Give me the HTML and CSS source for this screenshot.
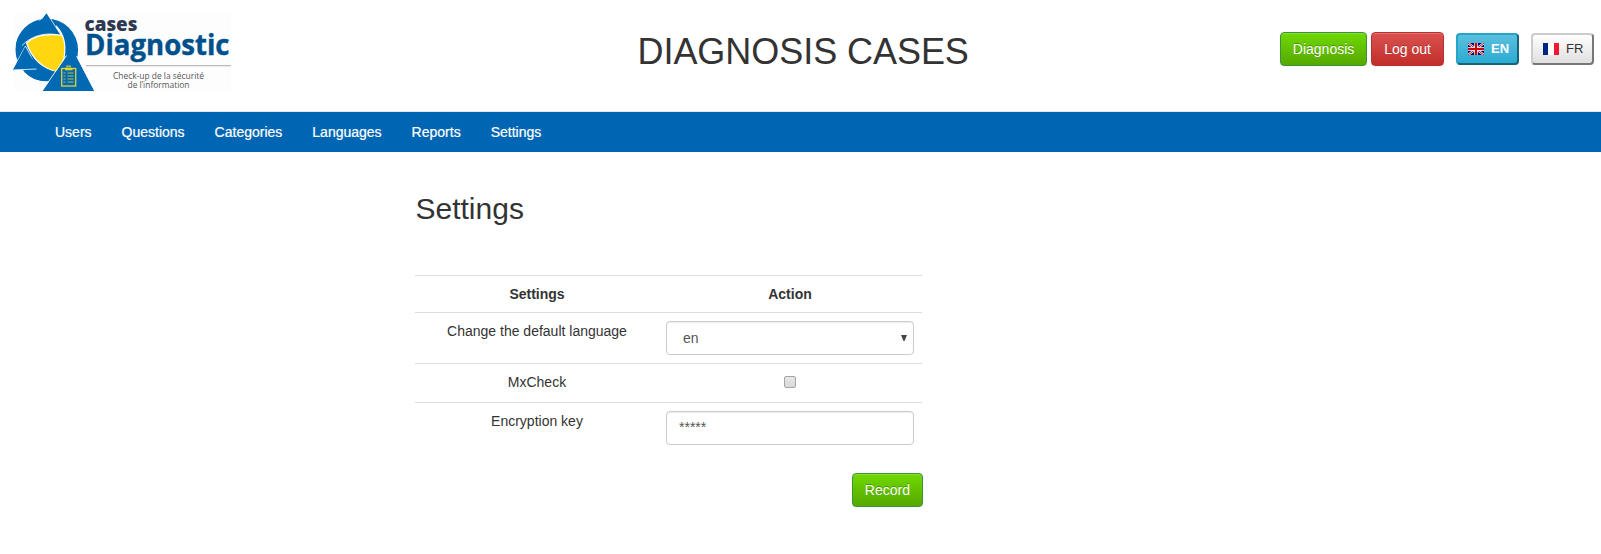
FILE: index.html
```html
<!DOCTYPE html>
<html lang="en">
<head>
<meta charset="utf-8">
<title>Diagnosis Cases</title>
<link rel="stylesheet" href="styles.css">
</head>
<body>
<header class="header">
  <svg class="logo" viewBox="0 0 240 111" role="img" aria-label="Cases Diagnostic">
    <rect x="13" y="13" width="218" height="78" fill="#fdfdfe"/>
    <circle cx="46.800" cy="50" r="31.300" fill="#0069b4"/>
    <path d="M26.500 43C34 35.500 46 33.500 60.500 35L56 26C64 34 66.500 44 64 58C63 64 61 69 58.500 72.500C44 69 32 59 26.500 43Z" fill="#ffd60f" stroke="#fff" stroke-width="1.200"/>
    <path d="M33.500 31L46.500 13L61 35C46 31.500 32 34.500 21.500 46L15.800 46C17 34 25 26 36 21.500L40 23Z" fill="#0069b4"/>
    <path d="M39.500 20.500L46.500 12.500L61 35.300C46 32 32 35 22 45.500" fill="none" stroke="#fff" stroke-width=".8"/>
    <path d="M25.500 46L12.500 70L37.500 69Z" fill="#0069b4" stroke="#fff" stroke-width=".8"/>
    <path d="M25 47L13.500 69.500H24C27 76 34 80 44 81.200L53 76L57 72C43 69.500 30 60 25 47Z" fill="#0069b4"/>
    <path d="M14 70L36.500 69" stroke="#fff" stroke-width=".8"/>
    <path d="M72.500 49L94.300 91H42.500L68 54Z" fill="#0069b4"/>
    <path d="M42 91L66.500 55.500" stroke="#fff" stroke-width=".9"/>
    <path d="M76.500 56L94.800 91" stroke="#fff" stroke-width=".7"/>
    <g fill="none" stroke="#e6d529">
      <rect x="61.700" y="68.500" width="14" height="17.500" stroke-width="1.300"/>
      <path d="M65 69h7.500" stroke-width="2.500"/>
      <path d="M67 67.500v-1.500h3v1.500" stroke-width="1.200"/>
      <path d="M63.500 73h2m-2 3h2m-2 3h2m-2 3h2M67.500 73h6m-6 3h6m-6 3h6m-6 3h6" stroke-width=".8"/>
    </g>
    <text class="logo-cases" x="84.500" y="30.500" textLength="53" lengthAdjust="spacingAndGlyphs">cases</text>
    <text class="logo-name" x="85" y="55" textLength="144.500" lengthAdjust="spacingAndGlyphs">Diagnostic</text>
    <path d="M86 65.700h145" stroke="#aaa" stroke-width="1"/>
    <text class="logo-tag" x="113" y="78.500" textLength="91" lengthAdjust="spacingAndGlyphs">Check-up de la sécurité</text>
    <text class="logo-tag" x="127.500" y="88" textLength="62" lengthAdjust="spacingAndGlyphs">de l’information</text>
  </svg>
  <h1 class="title">DIAGNOSIS CASES</h1>
  <div class="actions">
    <a class="btn btn-success">Diagnosis</a>
    <a class="btn btn-danger">Log out</a>
    <button class="lang lang-active">
      <svg class="flag" viewBox="0 0 16 12"><rect width="16" height="12" fill="#006"/><path d="M0 0L16 12M16 0L0 12" stroke="#fff" stroke-width="2.200"/><path d="M0 0L16 12M16 0L0 12" stroke="#c00" stroke-width="1"/><path d="M8 0V12M0 6H16" stroke="#fff" stroke-width="3.400"/><path d="M8 0V12M0 6H16" stroke="#c00" stroke-width="2"/></svg>
      EN
    </button>
    <button class="lang">
      <svg class="flag" viewBox="0 0 16 12" shape-rendering="crispEdges"><rect width="16" height="12" fill="#fff"/><path d="M0 0h5v12H0z" fill="#00267f"/><path d="M11 0h5v12h-5z" fill="#f31830"/></svg>
      FR
    </button>
  </div>
</header>
<nav class="nav">
  <a>Users</a><a>Questions</a><a>Categories</a><a>Languages</a><a>Reports</a><a>Settings</a>
</nav>
<main class="content">
  <h2 class="heading">Settings</h2>
  <table class="table">
    <colgroup><col class="col-name"><col></colgroup>
    <tr><th>Settings</th><th>Action</th></tr>
    <tr><td>Change the default language</td><td><div class="control select"><span>en</span><svg class="arrow" viewBox="0 0 6 6"><path d="M0 0h6L3.500 6h-1z" fill="#444"/></svg></div></td></tr>
    <tr class="check-row"><td>MxCheck</td><td><span class="checkbox"></span></td></tr>
    <tr><td>Encryption key</td><td><div class="control key">*****</div></td></tr>
  </table>
  <div class="footer"><button class="btn btn-success">Record</button></div>
</main>
</body>
</html>
```
FILE: styles.css
```css
* { box-sizing: border-box; }
body {
  margin: 0;
  background: #fff;
  color: #333;
  font: 14px/20px "Liberation Sans", Arial, sans-serif;
}
.header {
  display: grid;
  grid-template-columns: 637.5px 1fr auto;
  height: 112px;
  padding-right: 7px;
  border-bottom: 1px solid #e7e7e7;
}
.logo { width: 240px; height: 111px; }
.logo text { font-family: "Open Sans", sans-serif; }
.logo .logo-cases { font-size: 20px; font-weight: 800; fill: #2e3850; }
.logo .logo-name { font-size: 28px; font-weight: 700; fill: #00508c; stroke: #00508c; stroke-width: .4px; }
.logo .logo-tag { font-size: 8.3px; fill: #555; }
.title {
  margin: 32px 0 0;
  font-size: 36px;
  line-height: 40px;
  font-weight: 500;
  letter-spacing: -.05px;
  white-space: nowrap;
}
.actions {
  display: flex;
  align-items: center;
  height: 34px;
  margin-top: 32px;
}
.btn {
  display: inline-block;
  height: 34px;
  padding: 6px 12px;
  border: 1px solid;
  border-radius: 4px;
  color: #fff;
  font: 14px/20px "Liberation Sans", Arial, sans-serif;
  text-shadow: 0 -1px 0 rgba(0, 0, 0, .25);
  box-shadow: inset 0 1px 0 rgba(255, 255, 255, .2), 0 1px 2px rgba(0, 0, 0, .05);
}
.btn-success { border-color: #3a933a; background: linear-gradient(#70d900, #55a800); }
.btn-danger { margin-left: 4px; border-color: #b8312f; background: linear-gradient(#da524f, #c12e2a); }
.lang {
  display: flex;
  align-items: center;
  gap: 7px;
  width: 63px;
  height: 32px;
  margin: 0 0 0 12px;
  padding: 0 0 0 10px;
  border: 2px solid;
  border-color: #ccc #777 #777 #ccc;
  border-radius: 4px;
  background: linear-gradient(#fff, #dfdfdf);
  color: #333;
  font: 13px/20px "Liberation Sans", Arial, sans-serif;
}
.lang-active {
  border-color: #28a4c9 #18627a #18627a #28a4c9;
  background: linear-gradient(#5bc0de, #2aabd2);
  color: #fff;
  font-weight: 700;
}
.flag { width: 16px; height: 12px; }
.nav {
  display: flex;
  height: 40px;
  padding-left: 40px;
  background: #0066b3;
}
.nav a { padding: 10px 15px; color: #fff; -webkit-text-stroke: .2px #fff; }
.content { width: 508px; margin-left: 415px; }
.heading {
  margin: 40px 0 50px;
  padding-left: .5px;
  font-size: 30px;
  line-height: 33px;
  font-weight: 500;
}
.table {
  width: 507px;
  table-layout: fixed;
  border-collapse: separate;
  border-spacing: 0;
}
.col-name { width: 243px; }
.table th, .table td {
  padding: 8px;
  border-top: 1px solid #ddd;
  text-align: center;
  vertical-align: top;
}
.table tr > :first-child { padding-left: 9px; }
.check-row { height: 39px; }
.control {
  display: flex;
  height: 34px;
  padding: 6px 12px;
  border: 1px solid #ccc;
  border-radius: 4px;
  box-shadow: inset 0 1px 1px rgba(0, 0, 0, .075);
  color: #555;
}
.select { align-items: center; justify-content: space-between; padding: 6px 6px 6px 16px; }
.key { padding-top: 5px; }
.arrow { width: 6px; height: 6px; }
.checkbox {
  display: block;
  width: 12px;
  height: 12px;
  margin: 4px auto 0;
  border: 1px solid #a5a5a5;
  border-radius: 2px;
  background: linear-gradient(#e8e8e8, #d9d9d9);
}
.footer { display: flex; justify-content: flex-end; margin-top: 20px; }
```
